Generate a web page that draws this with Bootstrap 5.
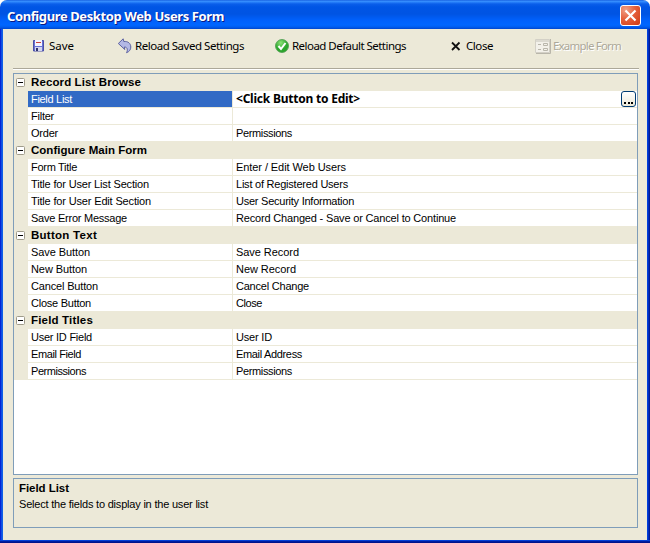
<!DOCTYPE html>
<html lang="en">
<head>
<meta charset="utf-8">
<meta name="viewport" content="width=device-width, initial-scale=1">
<title>Configure Desktop Web Users Form</title>
<link href="https://cdn.jsdelivr.net/npm/bootstrap@5.3.0/dist/css/bootstrap.min.css" rel="stylesheet">
<style>
html{background:#fff;overflow:hidden}
body{margin:0;width:650px;height:543px;overflow:hidden;background:#fff;color:#000;font:11px/16px "Liberation Sans",Arial,sans-serif}
span{white-space:nowrap}
.win{width:650px;height:543px;border-radius:7px 7px 0 0;background:#ece9d8;overflow:hidden}
.titlebar{height:29px;padding:1px 9px 0 7px;background:linear-gradient(#0a4fd8 0,#3d95ff 1px,#2b83fb 2px,#0a5eea 4px,#0055e5 7px,#0054e3 14px,#0060fb 20px,#0066ff 25px,#005df0 27px,#0046cd 29px)}
.caption{color:#fff;font:700 13px/26px "Noto Sans","Open Sans",sans-serif;text-shadow:1px 1px #0a1883;padding-top:1px}
.xbtn{width:21px;height:21px;border:1px solid #fff;border-radius:3px;background:radial-gradient(circle at 25% 20%,#f0a087 0,#e5603c 45%,#cf3a12 100%);margin-top:1px}
.frame{height:514px;border:solid;border-width:0 3px 3px;border-color:transparent;background:linear-gradient(#ece9d8,#ece9d8) padding-box,linear-gradient(90deg,#0019cf 0,#0831d9 1px,#166aee 2px,#0855dd 3px,#0855dd 646px,#003ddc 647px,#003ddc 648px,#001ea0 649px,#00138c 650px) border-box;padding:0 9px 0 10px;position:relative}
.frame::after{content:"";position:absolute;left:-3px;right:-3px;bottom:-3px;height:3px;background:linear-gradient(#0441d8 0 1px,#001ea0 1px 2px,#00138c 2px)}
.tools{height:40px;margin-right:-1px;border-bottom:1px solid #aca899;box-shadow:0 1px #fff;font:11.5px/16px "Noto Sans","Open Sans",sans-serif;padding-top:9px}
.tool{height:16px}
.t1{margin-left:17px;width:85px}.t2{width:157px}.t3{width:174px}.t4{width:87px}
.off{color:#aca899;text-shadow:1px 1px #fff}
.pgrid{height:402px;margin-top:4px;border:1px solid #7f9db9;background:#fff}
.hd{height:17px;background:#ece9d8}
.hd .gut{padding-left:2px;width:17px}
.bold{font-weight:700;font-size:11.5px}
.hd .bold{line-height:16px;margin-top:-1px}
.prow{height:17px;background:#ece9d8;padding-left:14px}
.key{width:204px;height:16px;background:#fff;padding-left:3px;margin-right:1px}
.val{height:16px;background:#fff;padding-left:3px}
.key.sel{background:#316ac5;color:#fff}
.tah{font:700 12px/16px "Noto Sans","Open Sans",sans-serif}
.dots{width:15px;height:16px;border:1px solid #003c74;border-radius:3px;background:linear-gradient(#fff,#ece9d8);margin-right:1px;padding:10px 2px 0}
.dots i{width:2px;height:2px;background:#000}
.help{height:50px;margin-top:3px;border:1px solid #7f9db9;padding:1px 5px}
.help .bold{line-height:16px}
svg{display:block;flex:none}
</style>
<script src="https://cdn.jsdelivr.net/npm/bootstrap@5.3.0/dist/js/bootstrap.bundle.min.js"></script>
</head>
<body>
<div class="win">
<header class="titlebar d-flex justify-content-between align-items-center">
<span class="caption" data-w="217">Configure Desktop Web Users Form</span>
<div class="xbtn" role="button" aria-label="Close window"><svg width="19" height="19" viewBox="0 0 19 19"><path d="M4.500 4.500l10 10M14.500 4.500l-10 10" stroke="#fff" stroke-width="2.200"/></svg></div>
</header>
<main class="frame">
<nav class="tools d-flex">
<div class="tool t1 d-flex align-items-center">
<svg width="19" height="16" viewBox="0 0 19 16"><path d="M3.500 2.500h10v10.500h-10z" fill="#6870d4" stroke="#4a4fa6"/><path d="M5 2h7v6H5z" fill="#f4f4ff"/><path d="M6 4h5v1H6z" fill="#c8433c"/><path d="M5 9h7v4H5z" fill="#d2d5ee"/><path d="M6 10h2v3H6z" fill="#30336f"/></svg>
<span data-w="25">Save</span></div>
<div class="tool t2 d-flex align-items-center">
<svg width="20" height="16" viewBox="0 0 20 16"><path d="M3.300 5.500L8.200.8l.6 2.700c4.200-.5 7 2 7 5.500 0 2.500-1.300 4.600-4.300 5.700 1.500-2.400 1-5.900-2.200-5.700l.5 2.500z" fill="#b3b8e5" stroke="#5d62a0" stroke-linejoin="round"/></svg>
<span data-w="109">Reload Saved Settings</span></div>
<div class="tool t3 d-flex align-items-center">
<svg width="20" height="16" viewBox="0 0 20 16"><defs><radialGradient id="green" cx=".4" cy=".25"><stop stop-color="#8be276"/><stop offset="1" stop-color="#2ba52c"/></radialGradient></defs><circle cx="10" cy="8" r="6.500" fill="url(#green)" stroke="#4a9a4c" stroke-width=".8"/><path d="M6.500 8l2.500 3 4.500-6" fill="none" stroke="#fff" stroke-width="2"/></svg>
<span data-w="114">Reload Default Settings</span></div>
<div class="tool t4 d-flex align-items-center">
<svg width="20" height="16" viewBox="0 0 20 16"><path d="M6 4.500l7.500 7.500M13.500 4.500l-7.500 7.500" stroke="#111" stroke-width="1.800"/></svg>
<span data-w="27">Close</span></div>
<div class="tool off d-flex align-items-center">
<svg width="20" height="16" viewBox="0 0 20 16"><path d="M2.500 1.500h14v13h-14z" fill="#f3f1ea" stroke="#d3d0c6"/><path d="M3 2h13v2H3z" fill="#dcdad1"/><path d="M17.500 1v14.500H3" fill="none" stroke="#b9b6aa"/><path d="M5 6.500h3m-3 5h3M10.500 5.500h4v2h-4zm0 5h4v2h-4z" stroke="#b9b6ab" fill="none"/></svg>
<span data-w="68">Example Form</span></div>
</nav>
<section class="pgrid" id="grid"></section>
<section class="help d-flex flex-column align-items-start"><span class="bold" data-w="50">Field List</span><span data-w="189">Select the fields to display in the user list</span></section>
</main>
</div>
<script>
// Each section: heading, heading width, then rows of key, key width, value, value width.
const sections=[
["Record List Browse",110,[["Field List",41,"<Click Button to Edit>",124],["Filter",23,"",0],["Order",27,"Permissions",56]]],
["Configure Main Form",116,[["Form Title",46,"Enter / Edit Web Users",110],["Title for User List Section",118,"List of Registered Users",112],["Title for User Edit Section",120,"User Security Information",118],["Save Error Message",96,"Record Changed - Save or Cancel to Continue",220]]],
["Button Text",66,[["Save Button",59,"Save Record",63],["New Button",56,"New Record",60],["Cancel Button",67,"Cancel Change",73],["Close Button",60,"Close",26]]],
["Field Titles",62,[["User ID Field",61,"User ID",36],["Email Field",50,"Email Address",66],["Permissions",55,"Permissions",56]]]];
const esc=s=>s.replace(/</g,"&lt;").replace(/>/g,"&gt;");
const minus='<svg width="9" height="9" viewBox="0 0 9 9"><rect x=".5" y=".5" width="8" height="8" rx="1" fill="#fff" stroke="#9f9b8a"/><path d="M2 4.500h5" stroke="#000"/></svg>';
let first=true;
document.getElementById("grid").innerHTML=sections.map(([h,w,rows])=>
`<div class="hd d-flex align-items-center"><div class="gut">${minus}</div><span class="bold" data-w="${w}">${h}</span></div>`+
rows.map(([k,kw,v,vw])=>{const s=first;first=false;return `<div class="prow d-flex align-items-start"><div class="key${s?" sel":""}"><span data-w="${kw}">${k}</span></div><div class="val flex-grow-1 d-flex justify-content-between">${v?`<span${s?' class="tah"':""} data-w="${vw}">${esc(v)}</span>`:""}${s?'<div class="dots d-flex justify-content-between"><i></i><i></i><i></i></div>':""}</div></div>`}).join("")).join("");
document.querySelectorAll("[data-w]").forEach(e=>{const w=e.getBoundingClientRect().width;e.style.letterSpacing=((e.dataset.w-w)/e.textContent.length).toFixed(3)+"px"});
</script>
</body>
</html>
